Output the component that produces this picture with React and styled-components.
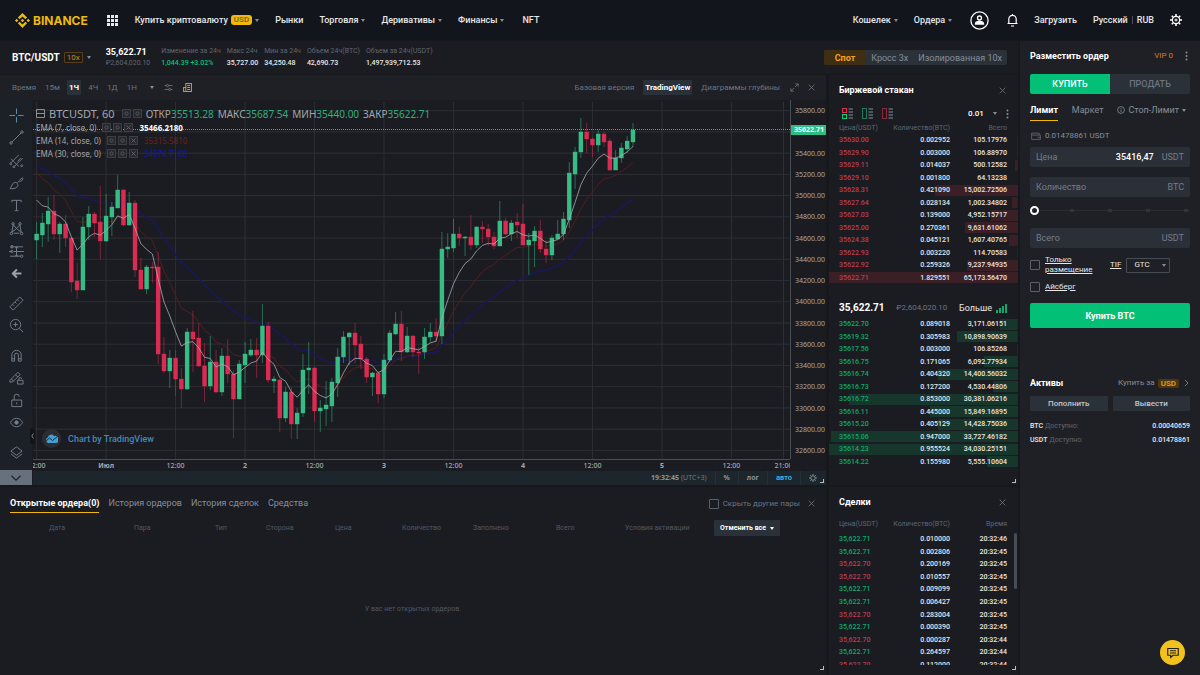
import { useState } from "react";
import styled, { createGlobalStyle, css } from "styled-components";

const colors = {
  header: "#12161c",
  page: "#17181c",
  panel: "#1b1c21",
  form: "#1f2026",
  input: "#2b2f38",
  button: "#2b3139",
  text: "#e6e8ea",
  muted: "#848e9c",
  dim: "#5f6672",
  green: "#02c076",
  gold: "#f0b90b",
};

// [direction, high, body top, body bottom, low]
const candles = [
  ["g", 122, 134, 140, 159], ["g", 113, 123, 135, 147], ["g", 97, 111, 124, 142], ["r", 95, 111, 134, 140],
  ["g", 122, 124, 134, 153], ["r", 115, 124, 138, 147], ["r", 137, 138, 182, 192], ["r", 163, 181, 190, 199],
  ["g", 117, 127, 190, 190], ["g", 106, 114, 127, 140], ["r", 112, 114, 123, 137], ["r", 86, 122, 141, 159],
  ["g", 94, 116, 141, 142], ["g", 102, 107, 117, 136], ["g", 75, 90, 108, 108], ["r", 89, 90, 125, 126],
  ["g", 92, 103, 125, 126], ["r", 100, 103, 170, 177], ["r", 158, 170, 189, 190], ["g", 165, 167, 189, 194],
  ["r", 162, 167, 168, 183], ["r", 152, 167, 254, 264], ["r", 237, 254, 271, 273], ["g", 250, 258, 271, 288],
  ["r", 250, 258, 279, 296], ["r", 268, 279, 289, 308], ["g", 228, 232, 289, 290], ["r", 211, 232, 239, 272],
  ["r", 223, 238, 266, 267], ["r", 243, 266, 286, 302], ["g", 236, 262, 286, 290], ["r", 250, 262, 292, 293],
  ["g", 248, 256, 292, 296], ["r", 239, 256, 274, 283], ["r", 270, 274, 299, 338], ["g", 260, 264, 299, 299],
  ["g", 242, 254, 265, 283], ["g", 239, 250, 255, 257], ["r", 238, 250, 255, 278], ["g", 204, 226, 255, 263],
  ["r", 222, 226, 280, 283], ["g", 276, 279, 281, 293], ["r", 279, 280, 318, 332], ["g", 287, 292, 318, 322],
  ["r", 287, 292, 324, 339], ["g", 308, 313, 324, 339], ["g", 254, 270, 313, 317], ["g", 242, 268, 270, 294],
  ["r", 267, 268, 311, 322], ["g", 300, 308, 311, 332], ["g", 281, 305, 309, 326], ["g", 278, 282, 306, 322],
  ["g", 248, 257, 283, 297], ["g", 231, 237, 257, 263], ["g", 232, 233, 237, 265], ["r", 223, 233, 245, 263],
  ["r", 236, 244, 259, 269], ["r", 257, 259, 277, 283], ["g", 272, 273, 277, 296], ["r", 272, 273, 294, 303],
  ["g", 254, 260, 294, 298], ["g", 230, 233, 260, 262], ["g", 212, 224, 234, 235], ["r", 211, 224, 252, 261],
  ["g", 227, 236, 252, 253], ["r", 235, 236, 252, 257], ["r", 247, 252, 253, 274], ["g", 228, 237, 252, 259],
  ["g", 223, 232, 237, 242], ["r", 218, 232, 236, 242], ["g", 132, 149, 236, 244], ["g", 133, 147, 149, 158],
  ["g", 119, 134, 148, 152], ["r", 127, 134, 138, 146], ["g", 136, 137, 138, 156], ["r", 115, 137, 145, 150],
  ["g", 126, 127, 145, 148], ["r", 121, 127, 129, 143], ["r", 124, 129, 137, 146], ["r", 132, 137, 146, 149],
  ["g", 101, 121, 146, 146], ["r", 118, 121, 134, 135], ["g", 120, 123, 134, 141], ["r", 113, 122, 125, 138],
  ["r", 104, 124, 145, 145], ["g", 133, 140, 145, 175], ["g", 126, 131, 141, 167], ["r", 120, 131, 149, 153],
  ["r", 140, 149, 155, 163], ["g", 135, 138, 155, 160], ["g", 120, 134, 139, 140], ["g", 112, 119, 134, 140],
  ["g", 62, 73, 120, 128], ["g", 47, 52, 74, 89], ["g", 18, 32, 52, 58], ["r", 23, 32, 39, 53],
  ["r", 37, 39, 45, 57], ["g", 30, 34, 45, 52], ["r", 32, 34, 42, 47], ["r", 38, 41, 70, 71],
  ["g", 50, 58, 70, 70], ["g", 43, 48, 58, 63], ["g", 36, 41, 49, 53], ["g", 23, 30, 42, 47],
];

const xAt = (i) => 3.6 + i * 5.79;

const emaPath = (length, seed) => {
  const k = 2 / (length + 1);
  let value = seed;
  return candles
    .map(([dir, , top, bottom], i) => {
      const close = dir === "g" ? top : bottom;
      if (i > 0) value += k * (close - value);
      return `${i ? "L" : "M"}${xAt(i).toFixed(1)} ${value.toFixed(1)}`;
    })
    .join("");
};

const timeMarks = [
  [0, "12:00"], [12, "Июл"], [24, "12:00"], [36, "2"], [48, "12:00"], [60, "3"],
  [72, "12:00"], [84, "4"], [96, "12:00"], [108, "5"], [120, "12:00"], [129, "21:00"],
];

const priceMarks = Array.from({ length: 17 }, (_, i) => 35800 - i * 200);

const asks = [
  ["35630.00", "0.002952", "105.17976"],
  ["35629.90", "0.003000", "106.88970"],
  ["35629.11", "0.014037", "500.12582"],
  ["35629.10", "0.001800", "64.13238"],
  ["35628.31", "0.421090", "15,002.72506"],
  ["35627.64", "0.028134", "1,002.34802"],
  ["35627.03", "0.139000", "4,952.15717"],
  ["35625.00", "0.270361", "9,631.61062"],
  ["35624.38", "0.045121", "1,607.40765"],
  ["35622.93", "0.003220", "114.70583"],
  ["35622.92", "0.259326", "9,237.94935"],
  ["35622.71", "1.829551", "65,173.56470"],
];

const bids = [
  ["35622.70", "0.089018", "3,171.06151"],
  ["35619.32", "0.305983", "10,898.90639"],
  ["35617.56", "0.003000", "106.85268"],
  ["35616.75", "0.171065", "6,092.77934"],
  ["35616.74", "0.404320", "14,400.56032"],
  ["35616.73", "0.127200", "4,530.44806"],
  ["35616.72", "0.853000", "30,381.06216"],
  ["35616.11", "0.445000", "15,849.16895"],
  ["35615.20", "0.405129", "14,428.75036"],
  ["35615.06", "0.947000", "33,727.46182"],
  ["35614.23", "0.955524", "34,030.25151"],
  ["35614.22", "0.155980", "5,555.10604"],
];

const trades = [
  ["g", "35,622.71", "0.010000", "20:32:46"],
  ["g", "35,622.71", "0.002806", "20:32:45"],
  ["r", "35,622.70", "0.200169", "20:32:45"],
  ["r", "35,622.70", "0.010557", "20:32:45"],
  ["g", "35,622.71", "0.009099", "20:32:45"],
  ["g", "35,622.71", "0.006427", "20:32:45"],
  ["r", "35,622.70", "0.283004", "20:32:45"],
  ["g", "35,622.71", "0.000390", "20:32:45"],
  ["r", "35,622.70", "0.000287", "20:32:44"],
  ["g", "35,622.71", "0.264597", "20:32:44"],
  ["r", "35,622.70", "0.112000", "20:32:44"],
];

const DEPTH_MAX = 34030;
const depthOf = (total) =>
  Math.min(100, (Number(total.replace(/,/g, "")) / DEPTH_MAX) * 100);

const stats = [
  ["Изменение за 24ч", "1,044.39 +3.02%", true],
  ["Макс 24ч", "35,727.00"],
  ["Мин за 24ч", "34,250.48"],
  ["Объем 24ч(BTC)", "42,690.73"],
  ["Объем за 24ч(USDT)", "1,497,939,712.53"],
];

/* ---------- icons ---------- */

const Icon = ({ size = 16, children, ...rest }) => (
  <svg
    width={size}
    height={size}
    viewBox="0 0 16 16"
    fill="none"
    stroke="currentColor"
    strokeWidth="1"
    aria-hidden="true"
    {...rest}
  >
    {children}
  </svg>
);

const CloseIcon = () => (
  <Icon size={9} strokeWidth="1.5">
    <path d="M3 3l10 10M13 3L3 13" />
  </Icon>
);

const toolGroups = [
  {
    height: 181,
    tools: [
      ["Перекрестие", <path key="a" stroke="#5b93b5" d="M8 .5v6M8 9.5v6M.5 8h6M9.5 8h6" />],
      ["Линия тренда", <g key="a"><path d="M3 13L13 3" /><circle cx="2.2" cy="13.8" r="1.3" /><circle cx="13.8" cy="2.2" r="1.3" /></g>],
      ["Вилы", <g key="a"><path d="M2 10.5L10.5 2M6 14l8.5-8.5M2 6l8.5 8.5M9 9l3.5-3.5" /><circle cx="1.8" cy="11.5" r="1" /><circle cx="5.2" cy="14.8" r="1" /><circle cx="13.5" cy="13.5" r="1" /></g>],
      ["Кисть", <path key="a" d="M1 13.5c2-.5 1.500-5.500 4.500-6.500 3-.8 5 2 3.500 4.200-1.500 2.300-5 2.600-8 2.300zM9 7c2-3 4 1 6-4.500M11 4.500l4-3" />],
      ["Текст", <path key="a" d="M3 4.5V2.500h10v2M8 2.500v11M6 13.500h4" />],
      ["Паттерн", <g key="a"><path d="M3 12L4.500 4 8 8l3.500-4L13 12 8 8zM4 11l-.5 1M5 13h6" /><circle cx="4.3" cy="3" r="1.3" /><circle cx="11.7" cy="3" r="1.3" /><circle cx="2.5" cy="13.3" r="1.3" /><circle cx="13.5" cy="13.3" r="1.3" /></g>],
      ["Прогноз", <g key="a"><path d="M3 1v3M3 3h12M5 8h11M0 8h3M1 13h11M8 3v10M6.500 11.500L8 13l1.500-1.500M6.500 4.500L8 3l1.500 1.500" /><circle cx="3" cy="3" r="1.3" /><circle cx="3" cy="8" r="1.3" /><circle cx="13.5" cy="13" r="1.3" /></g>],
      ["Назад", <path key="a" stroke="#9aa4af" strokeWidth="2.4" d="M14 8H4M8.500 3L3.500 8l5 5" />],
    ],
  },
  {
    height: 45,
    tools: [
      ["Линейка", <path key="a" d="M1 11.500L11.500 1 15 4.500 4.500 15zM4 9l1.500 1.500M6.500 6.500L8 8M9 4l1.500 1.500" />],
      ["Увеличить", <g key="a"><circle cx="7" cy="7" r="5.5" /><path d="M11 11l4 4M4.500 7h5M7 4.500v5" /></g>],
    ],
  },
  {
    height: 90,
    tools: [
      ["Магнит", <path key="a" d="M3 14V7.500a5 5 0 0 1 10 0V14h-3V7.500a2 2 0 0 0-4 0V14zM3 11.500h3M10 11.500h3" />],
      ["Режим рисования", <g key="a"><path d="M1 11L9.500 2.500 12 5 4 12.500l-3 .5zM2.500 9.500L5 12M7 5l2.500 2.500" /><path d="M9 11h6v4H9zM10.500 11V9.500a1.500 1.500 0 0 1 3 0" /></g>],
      ["Заблокировать", <path key="a" d="M3 7.500h10.500v7H3zM5.500 7.500V4a2.700 2.700 0 0 1 5.400 0M8.200 10v2" />],
      ["Скрыть", <g key="a"><path d="M1.500 8C3.500 4.500 5.500 3.500 8 3.500s4.500 1 6.500 4.500c-2 3.500-4 4.500-6.500 4.500S3.500 11.500 1.500 8z" /><circle cx="8" cy="8" r="1.8" fill="currentColor" /></g>],
    ],
  },
  {
    height: 22,
    tools: [
      ["Слои", <path key="a" d="M8 2L2 6.500 8 11l6-4.500zM2 9.500L8 14l6-4.500" />],
    ],
  },
];

const Diamond = () => (
  <svg width="15" height="15" viewBox="0 0 127 127" fill={colors.gold} aria-hidden="true">
    <path d="M38.7 53.2 63.3 28.6 87.9 53.2 102.2 38.9 63.3 0 24.4 38.9z" />
    <path d="M0 63.3 14.3 49l14.3 14.3-14.3 14.3z" />
    <path d="M38.7 73.4 63.3 98 87.9 73.4 102.2 87.7 63.3 126.6 24.4 87.7z" />
    <path d="M98 63.3 112.3 49l14.3 14.3-14.3 14.3z" />
    <path d="M77.8 63.3 63.3 48.8 48.8 63.3 63.3 77.8z" />
  </svg>
);

const BookIcon = ({ top, bottom }) => (
  <svg width="11" height="11" viewBox="0 0 11 11" fill="none" aria-hidden="true">
    {top === bottom ? (
      <rect x=".5" y=".5" width="4" height="10" stroke={top} />
    ) : (
      <>
        <rect x=".5" y=".5" width="4" height="4" stroke={top} />
        <rect x=".5" y="6.5" width="4" height="4" stroke={bottom} />
      </>
    )}
    <path d="M6.500 1H11M6.500 4H11M6.500 7H11M6.500 10H11" stroke="#848e9c" />
  </svg>
);

/* ---------- shared ---------- */

const GlobalStyle = createGlobalStyle`
  * { box-sizing: border-box; }
  body {
    margin: 0;
    background: ${colors.page};
    color: ${colors.text};
    font-family: Roboto, "Noto Sans", sans-serif;
    font-size: 8px;
    line-height: 12px;
  }
  button, input, select { font: inherit; color: inherit; }
  button { padding: 0; border: 0; background: none; }
  h2, p { margin: 0; }
  a { color: inherit; text-decoration: none; }
`;

const Caret = styled.i`
  flex: none;
  width: 0;
  height: 0;
  border: 2px solid transparent;
  border-top: 3px solid ${(p) => p.$color || colors.muted};
  border-bottom: 0;
`;

const Title = styled.h2`
  color: #fff;
  font-size: 9px;
  font-weight: 700;
  line-height: 12px;
`;

const IconButton = styled.button`
  display: flex;
  align-items: center;
  justify-content: center;
  color: ${(p) => p.$color || "#6b7480"};
`;

const Corner = styled.i`
  position: absolute;
  right: 2px;
  bottom: ${(p) => p.$bottom || 2}px;
  width: 4px;
  height: 4px;
  border: solid #b7bdc6;
  border-width: 0 1px 1px 0;
`;

const DotsButton = styled(IconButton)`
  flex: none;
`;

const Dots = () => (
  <DotsButton aria-label="Ещё" $color={colors.muted}>
    <svg width="3" height="10" viewBox="0 0 3 10" fill="currentColor">
      <circle cx="1.5" cy="1.5" r="1" />
      <circle cx="1.5" cy="5" r="1" />
      <circle cx="1.5" cy="8.5" r="1" />
    </svg>
  </DotsButton>
);

/* ---------- header ---------- */

const Shell = styled.div`
  display: flex;
  flex-direction: column;
  height: 100vh;
  overflow: hidden;
`;

const Header = styled.header`
  display: flex;
  align-items: center;
  justify-content: space-between;
  flex: none;
  height: 40px;
  padding: 0 18px 0 15px;
  background: ${colors.header};
  font-size: 9px;
  font-weight: 500;
`;

const Logo = styled.a`
  display: flex;
  align-items: center;
  gap: 3px;
  margin-right: 19px;
  color: ${colors.gold};
  font-family: Inter, sans-serif;
  font-size: 12px;
  font-weight: 700;
  line-height: 15px;
`;

const NavGroup = styled.nav`
  display: flex;
  align-items: center;
  white-space: nowrap;
`;

const NavLink = styled.a`
  display: flex;
  align-items: center;
  gap: 3px;
  margin-right: ${(p) => p.$gap || 16}px;
`;

const UsdTag = styled.span`
  padding: 0 3px;
  border-radius: 3px;
  background: ${colors.gold};
  color: #7a6114;
  font-size: 8px;
  line-height: 10px;
`;

const Divider = styled.i`
  width: 1px;
  height: 8px;
  margin: 0 1px;
  background: #4a5059;
`;

const Apps = styled(IconButton)`
  margin-right: 17px;
`;

const TopBar = () => (
  <Header>
    <NavGroup>
      <Logo href="#">
        <Diamond />
        BINANCE
      </Logo>
      <Apps aria-label="Сервисы" $color={colors.text}>
        <svg width="11" height="11" viewBox="0 0 11 11" fill="currentColor">
          {[0, 4, 8].map((x) => [0, 4, 8].map((y) => <rect key={x + "-" + y} x={x} y={y} width="3" height="3" />))}
        </svg>
      </Apps>
      <NavLink href="#">
        Купить криптовалюту <UsdTag>USD</UsdTag>
        <Caret />
      </NavLink>
      <NavLink href="#">Рынки</NavLink>
      <NavLink href="#">Торговля <Caret /></NavLink>
      <NavLink href="#">Деривативы <Caret /></NavLink>
      <NavLink href="#" $gap={18}>Финансы <Caret /></NavLink>
      <NavLink href="#">NFT</NavLink>
    </NavGroup>
    <NavGroup>
      <NavLink href="#">Кошелек <Caret /></NavLink>
      <NavLink href="#" $gap={18}>Ордера <Caret /></NavLink>
      <NavLink href="#" $gap={18} aria-label="Профиль">
        <svg width="19" height="19" viewBox="0 0 19 19" fill="none" stroke="#fff" strokeWidth="1.3">
          <circle cx="9.5" cy="9.5" r="8.6" />
          <circle cx="9.5" cy="7" r="2" />
          <path d="M5.500 13c0-3.500 8-3.500 8 0z" fill="#fff" />
        </svg>
      </NavLink>
      <NavLink href="#" aria-label="Уведомления">
        <svg width="11" height="14" viewBox="0 0 11 14" fill="none" stroke="#fff" strokeWidth="1.2">
          <path d="M.5 10.500h10M1.800 10V6a3.700 3.700 0 0 1 7.400 0v4M5.500 1v1.500M4 13h3" />
        </svg>
      </NavLink>
      <NavLink href="#">Загрузить</NavLink>
      <NavLink href="#">Русский <Divider /> RUB</NavLink>
      <IconButton aria-label="Настройки" $color="#fff">
        <svg width="12" height="12" viewBox="0 0 12 12" fill="none" stroke="currentColor">
          <circle cx="6" cy="6" r="3.6" strokeWidth="1.2" />
          <circle cx="6" cy="6" r="1" />
          <path strokeWidth="1.6" d="M6 0v2M6 10v2M0 6h2M10 6h2M1.800 1.800l1.400 1.400M8.800 8.800l1.400 1.400M10.200 1.800L8.800 3.200M3.200 8.800l-1.400 1.400" />
        </svg>
      </IconButton>
    </NavGroup>
  </Header>
);

/* ---------- ticker ---------- */

const Body = styled.div`
  display: grid;
  grid-template-columns: minmax(0, 1fr) 180px;
  gap: 2px;
  flex: 1;
  min-height: 0;
  padding-top: 1px;
`;

const Workspace = styled.main`
  display: flex;
  flex-direction: column;
  gap: 1px;
  min-width: 0;
  min-height: 0;
`;

const Ticker = styled.section`
  display: flex;
  align-items: center;
  flex: none;
  height: 33px;
  padding: 0 11px 0 12px;
  background: ${colors.panel};
  white-space: nowrap;
`;

const Pair = styled.button`
  display: flex;
  align-items: center;
  gap: 4px;
  margin-right: 15px;
  color: #fff;
  font-size: 10px;
  font-weight: 700;
`;

const Leverage = styled.span`
  padding: 0 2px;
  border: 1px solid #5a3d14;
  border-radius: 1px;
  color: #c98414;
  font-size: 8px;
  font-weight: 400;
  line-height: 9px;
`;

const LastPrice = styled.div`
  margin-right: 11px;
  color: #fff;
  font-size: 9px;
  font-weight: 700;
  line-height: 11px;

  span {
    display: block;
    color: ${colors.dim};
    font-size: 7px;
    font-weight: 400;
    line-height: 10px;
  }
`;

const Stats = styled.dl`
  display: flex;
  gap: 6px;
  margin: 0 auto 0 0;

  dt {
    color: ${colors.dim};
    font-size: 7px;
    line-height: 11px;
  }
`;

const StatValue = styled.dd`
  margin: 0;
  color: ${(p) => (p.$up ? colors.green : colors.text)};
  font-size: 7px;
  font-weight: 500;
  line-height: 12px;
`;

const Modes = styled.div`
  display: flex;
  border-radius: 2px;
  overflow: hidden;
  background: ${colors.button};
`;

const Mode = styled.button`
  height: 15px;
  padding: 0 5px;
  color: ${(p) => (p.$active ? "#f5a21b" : colors.muted)};
  font-size: 9px;
  ${(p) =>
    p.$active &&
    css`
      padding: 0 11px;
      background: #3f2e14;
      font-weight: 700;
    `}
`;

const PairTicker = () => (
  <Ticker>
    <Pair>
      BTC/USDT <Leverage>10x</Leverage>
      <Caret />
    </Pair>
    <LastPrice>
      35,622.71
      <span>₽2,604,020.10</span>
    </LastPrice>
    <Stats>
      {stats.map(([label, value, up]) => (
        <div key={label}>
          <dt>{label}</dt>
          <StatValue $up={up}>{value}</StatValue>
        </div>
      ))}
    </Stats>
    <Modes>
      <Mode $active>Спот</Mode>
      <Mode>Кросс 3x</Mode>
      <Mode>Изолированная 10x</Mode>
    </Modes>
  </Ticker>
);

/* ---------- chart ---------- */

const Panels = styled.div`
  display: grid;
  grid-template-columns: minmax(0, 1fr) 189px;
  gap: 3px;
  flex: 1;
  min-height: 0;
`;

const Column = styled.div`
  display: flex;
  flex-direction: column;
  gap: 2px;
  min-height: 0;
`;

const ChartPanel = styled.section`
  display: flex;
  flex-direction: column;
  flex: none;
  height: 410px;
  background: ${colors.panel};
`;

const ChartBar = styled.div`
  display: flex;
  align-items: center;
  flex: none;
  height: 25px;
  padding: 0 10px;
  background: #1f2025;
  color: #6b7480;
  font-size: 8px;
  line-height: 15px;
`;

const Interval = styled.button`
  display: block;
  height: 15px;
  margin-right: ${(p) => p.$gap || 5}px;
  padding: 0 2px;
  border-radius: 1px;
  ${(p) =>
    p.$active &&
    css`
      background: ${colors.button};
      color: #fff;
      font-weight: 700;
    `}
`;

const Spacer = styled.div`
  flex: 1;
`;

const BarIcons = styled.div`
  display: flex;
  align-items: center;
  gap: ${(p) => p.$gap}px;
`;

const ChartBody = styled.div`
  display: flex;
  flex: 1;
  min-height: 0;
`;

const Rail = styled.div`
  display: flex;
  flex-direction: column;
  gap: 7px;
  flex: none;
  width: 32px;
  padding-top: 4px;
  background: #1c2027;
  color: #75808b;
`;

const ToolGroup = styled.div`
  display: grid;
  grid-auto-rows: 1fr;
  flex: none;
  height: ${(p) => p.$height}px;
`;

const Tool = styled(IconButton)`
  color: inherit;
`;

const Collapse = styled(IconButton)`
  flex: none;
  height: 15px;
  margin-top: auto;
  background: #66717c;
`;

const PlotColumn = styled.div`
  display: flex;
  flex-direction: column;
  flex: 1;
  min-width: 0;
  margin-left: 1px;
`;

const PlotRow = styled.div`
  position: relative;
  display: flex;
  flex: 1;
  min-height: 0;
`;

const Plot = styled.svg`
  flex: 1;
  min-width: 0;
  height: 100%;
  overflow: hidden;
  font-family: "Noto Sans", sans-serif;
  font-size: 7px;
`;

const PriceAxis = styled.div`
  position: relative;
  display: flex;
  flex-direction: column;
  justify-content: space-between;
  flex: none;
  width: 36px;
  height: 359px;
  padding: 6px 0 4px 4px;
  border-left: 1px solid #4b4d52;
  color: #a6a8ad;
  font-family: "Noto Sans", sans-serif;
  font-size: 7px;
  line-height: 9px;

  span {
    height: 9px;
  }
`;

const PriceTag = styled.b`
  position: absolute;
  top: 25px;
  right: 0;
  left: 0;
  height: 10px;
  padding-left: 3px;
  background: #2ebd85;
  color: #fff;
  line-height: 10px;
`;

const Legend = styled.div`
  position: absolute;
  top: 6px;
  left: 3px;
  color: #a4a6ab;
  font-family: "Noto Sans", sans-serif;
`;

const LegendRow = styled.div`
  display: flex;
  align-items: center;
  gap: ${(p) => p.$gap || 8}px;
  height: ${(p) => p.$height || 13}px;
  white-space: nowrap;
`;

const LegendValue = styled.span`
  color: ${(p) => p.$color};
  font-weight: ${(p) => (p.$bold ? 700 : 400)};
`;

const Symbol = styled.span`
  margin-right: 3px;
  font-size: 11px;
`;

const Ohlc = styled.span`
  font-size: 10px;

  b {
    color: #2fae80;
    font-weight: 400;
  }
`;

const MiniBoxes = styled.span`
  display: flex;
  gap: 2px;
`;

const Credit = styled.a`
  position: absolute;
  bottom: 23px;
  left: 9px;
  display: flex;
  align-items: center;
  gap: 7px;
  color: #4488ba;
  font-size: 9px;
  font-weight: 500;
`;

const CreditBadge = styled.span`
  display: flex;
  align-items: center;
  justify-content: center;
  width: 19px;
  height: 19px;
  border-radius: 50%;
  background: #2c2d31;
`;

const RailHandle = styled.button`
  position: absolute;
  bottom: 27px;
  left: -3px;
  display: flex;
  align-items: center;
  justify-content: center;
  width: 5px;
  height: 16px;
  border-radius: 2px;
  background: #111318;
  color: #a0a6ae;
`;

const ChartFooter = styled.div`
  position: relative;
  display: flex;
  align-items: center;
  justify-content: flex-end;
  flex: none;
  height: 14px;
  padding-right: 1px;
  background: #1c262c;
  color: #6f7b85;
  font-family: "Noto Sans", sans-serif;
  font-size: 7px;

  b {
    margin-right: 2px;
    color: #8a959e;
  }
`;

const FooterGroup = styled.div`
  display: flex;
  margin-left: 8px;
`;

const FooterItem = styled.button`
  display: flex;
  align-items: center;
  justify-content: center;
  height: 14px;
  padding: 0 8px;
  border-left: 1px solid #243139;
  color: ${(p) => (p.$active ? "#33b4e0" : "#8a959e")};
  font-weight: 700;
`;

const Boxes = ({ count }) => (
  <MiniBoxes>
    {Array.from({ length: count }, (_, i) => (
      <svg key={i} width="9" height="9" viewBox="0 0 9 9" fill="none" stroke="#3c3f45">
        <rect x=".5" y=".5" width="8" height="8" fill="#26282d" />
        {i === 2 ? (
          <path d="M2.500 2.500l4 4M6.500 2.500l-4 4" stroke="#5e6167" />
        ) : (
          <circle cx="4.5" cy="4.5" r="1.6" stroke="#54575d" />
        )}
      </svg>
    ))}
  </MiniBoxes>
);

const emaRows = [
  ["EMA (7, close, 0)", "35466.2180", "#fff", true],
  ["EMA (14, close, 0)", "35315.5810", "#6f1f1f"],
  ["EMA (30, close, 0)", "34974.7180", "#1616a8"],
];

const CandleChart = () => (
  <Plot role="img" aria-label="График BTCUSDT">
    <g stroke="#2d2f33">
      {priceMarks.map((price, i) => (
        <line key={price} x1="0" x2="100%" y1={10.7 + i * 21.23} y2={10.7 + i * 21.23} />
      ))}
      {timeMarks.map(([i]) => (
        <line key={i} x1={xAt(i)} x2={xAt(i)} y1="2" y2="359" />
      ))}
    </g>
    <line x1="0" x2="100%" y1="359.5" y2="359.5" stroke="#4b4d52" />
    <path d={emaPath(30, 65)} fill="none" stroke="#18185c" strokeWidth="1.5" />
    <path d={emaPath(14, 72)} fill="none" stroke="#541c1d" />
    {candles.map(([dir, high, top, bottom, low], i) => (
      <g key={i} fill={dir === "g" ? "#36bd85" : "#dc2b52"}>
        <rect x={xAt(i) - 0.5} y={high} width="1" height={low - high} opacity=".5" />
        <rect x={xAt(i) - 2.2} y={top - 0.2} width="4.4" height={bottom - top + 0.4} />
      </g>
    ))}
    <path d={emaPath(7, 100)} fill="none" stroke="#a9abad" strokeWidth=".8" />
    <line x1="0" x2="100%" y1="29.5" y2="29.5" stroke="#2ebd85" strokeDasharray="1 1" />
    <g fill="#a6a8ad" textAnchor="middle">
      {timeMarks.map(([i, label]) => (
        <text key={i} x={xAt(i)} y="368" fontWeight={label.length < 5 ? 700 : 500}>
          {label}
        </text>
      ))}
    </g>
  </Plot>
);

const Chart = () => (
  <ChartPanel>
    <ChartBar>
      <Interval as="span">Время</Interval>
      <Interval>15м</Interval>
      <Interval $active>1Ч</Interval>
      <Interval>4Ч</Interval>
      <Interval>1Д</Interval>
      <Interval $gap={11}>1Н</Interval>
      <BarIcons $gap={10}>
        <Caret />
        <IconButton aria-label="Индикаторы">
          <Icon size={9} strokeWidth="1.6">
            <path d="M1 4.500h3M8 4.500h7M1 11.500h7M12 11.500h3" />
            <circle cx="6" cy="4.5" r="2" />
            <circle cx="10" cy="11.5" r="2" />
          </Icon>
        </IconButton>
        <IconButton aria-label="Новости" $color="#c99a2e">
          <Icon size={9} strokeWidth="1.8">
            <path d="M5 1h10v14H5zM5 8H1v7h5M7.500 4.500h5M7.500 8h5M7.500 11.500h5" />
          </Icon>
        </IconButton>
      </BarIcons>
      <Spacer />
      <Interval $gap={7}>Базовая версия</Interval>
      <Interval $active $gap={7}>TradingView</Interval>
      <Interval $gap={8}>Диаграммы глубины</Interval>
      <BarIcons $gap={8}>
        <IconButton aria-label="Развернуть">
          <Icon size={9} strokeWidth="1.5">
            <path d="M9.500 1.500h5v5M14 2L9 7M6.500 14.500h-5v-5M2 14l5-5" />
          </Icon>
        </IconButton>
        <IconButton aria-label="Закрыть график"><CloseIcon /></IconButton>
      </BarIcons>
    </ChartBar>
    <ChartBody>
      <Rail>
        {toolGroups.map((group) => (
          <ToolGroup key={group.height} $height={group.height}>
            {group.tools.map(([label, drawing]) => (
              <Tool key={label} aria-label={label}>
                <Icon size={label === "Назад" ? 13 : 15}>{drawing}</Icon>
              </Tool>
            ))}
          </ToolGroup>
        ))}
        <Collapse aria-label="Свернуть панель" $color="#1c2027">
          <Icon size={12} strokeWidth="1.5"><path d="M2 5l6 6 6-6" /></Icon>
        </Collapse>
      </Rail>
      <PlotColumn>
        <PlotRow>
          <CandleChart />
          <PriceAxis>
            {priceMarks.map((price) => (
              <span key={price}>{price === 35600 ? "" : price.toFixed(2)}</span>
            ))}
            <PriceTag>35622.71</PriceTag>
          </PriceAxis>
          <Legend>
            <LegendRow $height={15} $gap={4}>
              <svg width="9" height="9" viewBox="0 0 9 9" fill="none" stroke="#8c8e93">
                <path d="M.5.5h8v8h-8zM.5 4.500h8" />
              </svg>
              <Symbol>BTCUSDT, 60</Symbol>
              <Boxes count={2} />
              <Ohlc>ОТКР<b>35513.28</b></Ohlc>
              <Ohlc>МАКС<b>35687.54</b></Ohlc>
              <Ohlc>МИН<b>35440.00</b></Ohlc>
              <Ohlc>ЗАКР<b>35622.71</b></Ohlc>
            </LegendRow>
            {emaRows.map(([label, value, color, bold]) => (
              <LegendRow key={label} $gap={6}>
                {label}
                <Boxes count={3} />
                <LegendValue $color={color} $bold={bold}>{value}</LegendValue>
              </LegendRow>
            ))}
          </Legend>
          <Credit href="#">
            <CreditBadge>
              <svg width="13" height="9" viewBox="0 0 13 9">
                <path d="M3 9a3 3 0 0 1-.3-5.500 3.500 3.500 0 0 1 6.300-1.500 3 3 0 0 1 2 7z" fill="#3f9fd8" />
                <path d="M.5 7.500L4.500 4l3 2.500 5-4" fill="none" stroke="#1f2a33" />
              </svg>
            </CreditBadge>
            Chart by TradingView
          </Credit>
          <RailHandle aria-label="Скрыть инструменты">
            <svg width="3" height="6" viewBox="0 0 3 6" fill="none" stroke="currentColor" strokeWidth=".8">
              <path d="M2.500.5L.8 3l1.700 2.500" />
            </svg>
          </RailHandle>
        </PlotRow>
        <ChartFooter>
          <b>19:32:45</b> (UTC+3)
          <FooterGroup>
            <FooterItem>%</FooterItem>
            <FooterItem>лог</FooterItem>
            <FooterItem $active>авто</FooterItem>
            <FooterItem aria-label="Настройки графика">
              <Icon size={8} strokeWidth="1.8">
                <circle cx="8" cy="8" r="4.5" />
                <path d="M8 0v3M8 13v3M0 8h3M13 8h3M2.500 2.500l2 2M11.500 11.500l2 2M13.500 2.500l-2 2M4.500 11.500l-2 2" />
              </Icon>
            </FooterItem>
          </FooterGroup>
          <Corner />
        </ChartFooter>
      </PlotColumn>
    </ChartBody>
  </ChartPanel>
);

/* ---------- open orders ---------- */

const OrdersPanel = styled.section`
  position: relative;
  display: flex;
  flex-direction: column;
  flex: 1;
  min-height: 0;
  background: ${colors.panel};
`;

const OrdersBar = styled.div`
  display: flex;
  align-items: center;
  height: 25px;
  padding: 8px 10px 0 10px;
`;

const OrdersTab = styled.button`
  height: 18px;
  margin-right: 9px;
  border-bottom: 1px solid transparent;
  color: ${colors.muted};
  font-size: 9px;
  ${(p) =>
    p.$active &&
    css`
      border-color: ${colors.gold};
      color: #fff;
      font-weight: 700;
    `}
`;

const HideOthers = styled.label`
  display: flex;
  align-items: center;
  gap: 4px;
  margin-right: 7px;
  color: #6b7480;
`;

const Check = styled.input`
  appearance: none;
  flex: none;
  width: 10px;
  height: 10px;
  margin: 0;
  border: 1px solid #5a616d;
  border-radius: 1px;

  &:checked {
    background: ${colors.gold};
  }
`;

const OrdersTable = styled.table`
  width: 100%;
  padding: 8px 0 0 49px;
  border-spacing: 0;
  table-layout: fixed;
  color: #525863;
  font-size: 7px;

  th {
    padding: 0;
    font-weight: 400;
    text-align: left;
  }
`;

const CancelAll = styled.button`
  display: flex;
  align-items: center;
  gap: 4px;
  height: 16px;
  padding: 0 6px;
  border-radius: 1px;
  background: ${colors.button};
  color: #fff;
  font-size: 7px;
  font-weight: 700;
  white-space: nowrap;
`;

const Empty = styled.p`
  flex: 1;
  padding-top: 67px;
  color: #525863;
  font-size: 7px;
  text-align: center;
`;

const orderColumns = [
  ["Дата", 85], ["Пара", 81], ["Тип", 51], ["Сторона", 69], ["Цена", 67],
  ["Количество", 71], ["Заполнено", 83], ["Всего", 69], ["Условия активации", 89],
];

const OpenOrders = () => {
  const [hidden, setHidden] = useState(false);
  return (
    <OrdersPanel>
      <OrdersBar>
        <OrdersTab $active>Открытые ордера(0)</OrdersTab>
        <OrdersTab>История ордеров</OrdersTab>
        <OrdersTab>История сделок</OrdersTab>
        <OrdersTab>Средства</OrdersTab>
        <Spacer />
        <HideOthers>
          <Check type="checkbox" checked={hidden} onChange={(e) => setHidden(e.target.checked)} />
          Скрыть другие пары
        </HideOthers>
        <IconButton aria-label="Закрыть ордера"><CloseIcon /></IconButton>
      </OrdersBar>
      <OrdersTable>
        <colgroup>
          {orderColumns.map(([name, width]) => <col key={name} width={width} />)}
          <col />
        </colgroup>
        <thead>
          <tr>
            {orderColumns.map(([name]) => <th key={name}>{name}</th>)}
            <th>
              <CancelAll>Отменить все <Caret $color="#fff" /></CancelAll>
            </th>
          </tr>
        </thead>
      </OrdersTable>
      <Empty>У вас нет открытых ордеров.</Empty>
      <Corner $bottom={5} />
    </OrdersPanel>
  );
};

/* ---------- order book & trades ---------- */

const BookPanel = styled.section`
  position: relative;
  flex: none;
  height: 410px;
  background: ${colors.panel};
`;

const TradesPanel = styled.section`
  position: relative;
  display: flex;
  flex-direction: column;
  flex: 1;
  min-height: 0;
  background: ${colors.panel};
`;

const PanelHead = styled.div`
  display: flex;
  align-items: center;
  justify-content: space-between;
  flex: none;
  height: 30px;
  padding: 0 11px 0 10px;
`;

const BookTools = styled.div`
  display: flex;
  align-items: center;
  gap: 9px;
  height: 17px;
  padding: 0 9px 0 13px;
`;

const StepSelect = styled.select`
  appearance: none;
  margin-left: auto;
  padding: 0;
  border: 0;
  background: transparent;
  color: #fff;
  font-size: 8px;
  font-weight: 500;
`;

const BookTable = styled.table`
  display: block;
  font-size: 7px;
  font-weight: 500;

  thead,
  tbody {
    display: grid;
    grid-auto-rows: 1fr;
  }

  tbody {
    height: ${(p) => p.$height}px;
    margin-top: ${(p) => p.$gap || 0}px;
  }

  tr {
    display: grid;
    grid-template-columns: 62px 49px 1fr;
    align-items: center;
    padding: 0 11px 0 10px;
    background-repeat: no-repeat;
    background-position: right center;
  }

  th,
  td {
    padding: 0;
    text-align: right;
    white-space: nowrap;
  }

  td:first-child,
  th:first-child {
    text-align: left;
  }

  th {
    color: ${colors.dim};
    font-weight: 400;
    line-height: ${(p) => p.$head || 12}px;
  }

  th:nth-child(2) {
    display: flex;
    justify-content: flex-end;
  }
`;

const Price = styled.td`
  color: ${(p) => (p.$side === "g" ? "#0da96c" : "#b93c51")};
`;

const MidPrice = styled.div`
  display: flex;
  align-items: center;
  justify-content: space-between;
  height: 34px;
  padding: 14px 11px 0 10px;

  b {
    color: #fff;
    font-size: 10px;
    font-weight: 700;
  }

  span {
    color: #6b7480;
    font-size: 8px;
  }

  a {
    display: flex;
    align-items: center;
    gap: 4px;
    font-size: 9px;
  }
`;

const TradesBody = styled.div`
  display: flex;
  flex: 1;
  align-items: flex-start;
  min-height: 0;
  margin-bottom: 10px;
  overflow: hidden;

  table {
    flex: 1;
  }
`;

const Scrollbar = styled.i`
  position: absolute;
  top: 46px;
  right: 1px;
  width: 3px;
  height: 56px;
  border-radius: 2px;
  background: #474d57;
`;

const BookRows = ({ rows, side }) => (
  <tbody>
    {rows.map(([price, amount, total]) => (
      <tr
        key={price}
        style={{
          backgroundImage: side === "g" ? "linear-gradient(#17362c, #17362c)" : "linear-gradient(#3a1f27, #3a1f27)",
          backgroundSize: `${depthOf(total)}% 11px`,
        }}
      >
        <Price $side={side}>{price}</Price>
        <td>{amount}</td>
        <td>{total}</td>
      </tr>
    ))}
  </tbody>
);

const OrderBook = () => (
  <BookPanel>
    <PanelHead>
      <Title>Биржевой стакан</Title>
      <IconButton aria-label="Закрыть стакан"><CloseIcon /></IconButton>
    </PanelHead>
    <BookTools>
      <IconButton aria-label="Весь стакан"><BookIcon top="#d9304e" bottom="#0ecb81" /></IconButton>
      <IconButton aria-label="Покупка"><BookIcon top="#1c7a55" bottom="#1c7a55" /></IconButton>
      <IconButton aria-label="Продажа"><BookIcon top="#8a2a3c" bottom="#8a2a3c" /></IconButton>
      <StepSelect aria-label="Шаг цены" defaultValue="0.01">
        <option>0.01</option>
        <option>0.1</option>
      </StepSelect>
      <Caret />
      <Dots />
    </BookTools>
    <BookTable $height={150}>
      <thead>
        <tr>
          <th>Цена(USDT)</th>
          <th>Количество(BTC)</th>
          <th>Всего</th>
        </tr>
      </thead>
      <BookRows rows={asks} side="r" />
    </BookTable>
    <MidPrice>
      <b>35,622.71</b>
      <span>₽2,604,020.10</span>
      <a href="#">
        Больше
        <svg width="11" height="9" viewBox="0 0 11 9" fill="#0da96c" aria-hidden="true">
          <path d="M0 6h2v3H0zM3 4h2v5H3zM6 2h2v7H6zM9 0h2v9H9z" />
        </svg>
      </a>
    </MidPrice>
    <BookTable $height={150}>
      <BookRows rows={bids} side="g" />
    </BookTable>
    <Corner />
  </BookPanel>
);

const Trades = () => (
  <TradesPanel>
    <PanelHead>
      <Title>Сделки</Title>
      <IconButton aria-label="Закрыть сделки"><CloseIcon /></IconButton>
    </PanelHead>
    <TradesBody>
      <BookTable $height={138} $head={14} $gap={2}>
        <thead>
          <tr>
            <th>Цена(USDT)</th>
            <th>Количество(BTC)</th>
            <th>Время</th>
          </tr>
        </thead>
        <tbody>
          {trades.map(([side, price, amount, time], i) => (
            <tr key={i}>
              <Price $side={side}>{price}</Price>
              <td>{amount}</td>
              <td>{time}</td>
            </tr>
          ))}
        </tbody>
      </BookTable>
    </TradesBody>
    <Scrollbar />
    <Corner $bottom={5} />
  </TradesPanel>
);

/* ---------- order form ---------- */

const FormPanel = styled.aside`
  position: relative;
  padding: 0 10px;
  background: ${colors.form};
`;

const FormHead = styled.div`
  display: flex;
  align-items: center;
  height: 33px;
  padding: 0 2px 3px 0;

  a {
    margin: 0 12px 0 auto;
    color: #c98414;
    font-size: 8px;
  }
`;

const Sides = styled.div`
  display: grid;
  grid-template-columns: 1fr 1fr;
  overflow: hidden;
  border-radius: 2px;
`;

const Side = styled.button`
  height: 20px;
  background: ${(p) => (p.$active ? colors.green : colors.button)};
  color: ${(p) => (p.$active ? "#fff" : "#6b7480")};
  font-size: 9px;
  font-weight: 500;
`;

const TypeTabs = styled.div`
  display: flex;
  justify-content: space-between;
  height: 31px;
  padding: 9px 4px 0 0;
`;

const TypeTab = styled.button`
  display: flex;
  align-items: center;
  gap: 3px;
  height: 18px;
  padding-bottom: 3px;
  border-bottom: 1px solid transparent;
  color: ${colors.muted};
  font-size: 9px;
  ${(p) =>
    p.$active &&
    css`
      border-color: ${colors.gold};
      color: #fff;
      font-weight: 700;
    `}
`;

const Balance = styled.p`
  display: flex;
  align-items: center;
  gap: 4px;
  height: 22px;
  padding-left: 1px;
  color: ${colors.muted};
  font-size: 8px;

  svg {
    color: ${colors.dim};
  }
`;

const Field = styled.label`
  display: flex;
  align-items: center;
  height: 20px;
  padding: 0 6px;
  border-radius: 2px;
  background: ${colors.input};
  color: #747d8a;
  font-size: 9px;

  input {
    flex: 1;
    min-width: 0;
    padding: 0 8px 0 0;
    border: 0;
    outline: 0;
    background: transparent;
    color: #fff;
    font-weight: 500;
    text-align: right;
  }
`;

const Stack = styled.div`
  display: grid;
  grid-template-columns: minmax(0, 1fr);
  gap: 10px;
`;

const SliderRow = styled.div`
  display: flex;
  align-items: center;
  height: 7px;
  margin-bottom: 4px;

  input {
    appearance: none;
    width: 100%;
    height: 9px;
    margin: 0;
    background:
      radial-gradient(circle at 42px 50%, #2f333b 2px, transparent 2px),
      radial-gradient(circle at 80px 50%, #2f333b 2px, transparent 2px),
      radial-gradient(circle at 118px 50%, #2f333b 2px, transparent 2px),
      radial-gradient(circle at 156px 50%, #2f333b 2px, transparent 2px),
      linear-gradient(#292c33, #292c33) center / 100% 1px no-repeat;
  }

  input::-webkit-slider-thumb {
    appearance: none;
    width: 9px;
    height: 9px;
    border: 2px solid #fff;
    border-radius: 50%;
    background: ${colors.form};
  }
`;

const Options = styled.div`
  display: grid;
  grid-template-columns: 80px 1fr;
  align-items: center;
  row-gap: 7px;
  padding: 7px 0 11px;
  font-size: 8px;
  line-height: 10px;
`;

const Option = styled.label`
  display: flex;
  align-items: center;
  gap: 5px;
  text-decoration: underline;
`;

const TifSelect = styled.select`
  appearance: none;
  width: 44px;
  height: 15px;
  padding: 0 7px;
  border: 1px solid #474d57;
  border-radius: 1px;
  background: transparent;
  color: ${colors.text};
  line-height: 12px;
`;

const SelectWrap = styled.span`
  position: relative;

  i {
    position: absolute;
    top: 6px;
    right: 4px;
  }
`;

const Submit = styled.button`
  width: 100%;
  height: 25px;
  border-radius: 2px;
  background: ${colors.green};
  color: #fff;
  font-size: 9px;
  font-weight: 700;
`;

const AssetsHead = styled.div`
  display: flex;
  align-items: center;
  justify-content: space-between;
  margin: 49px 0 7px;

  a {
    display: flex;
    align-items: center;
    gap: 3px;
    color: ${colors.muted};
  }

  span {
    padding: 0 3px;
    border-radius: 2px;
    background: #4a3711;
    color: #eda51c;
    font-weight: 500;
    line-height: 9px;
  }
`;

const AssetButtons = styled.div`
  display: grid;
  grid-template-columns: 1fr 1fr;
  gap: 5px;
  margin-bottom: 8px;

  button {
    height: 15px;
    border-radius: 1px;
    background: ${colors.button};
    color: #c3c8ce;
    font-size: 8px;
    font-weight: 500;
  }
`;

const AssetRow = styled.p`
  display: flex;
  align-items: center;
  height: 14px;
  font-size: 7px;
  font-weight: 500;

  span {
    margin: 0 auto 0 2px;
    color: ${colors.dim};
    font-weight: 400;
  }
`;

const ChatButton = styled(IconButton)`
  position: absolute;
  right: 15px;
  bottom: 10px;
  width: 25px;
  height: 25px;
  border-radius: 50%;
  background: #f3c11b;
`;

const OrderForm = () => {
  const [price, setPrice] = useState("35416,47");
  const [amount, setAmount] = useState("");
  const [total, setTotal] = useState("");
  const [share, setShare] = useState(0);
  return (
    <FormPanel>
      <FormHead>
        <Title>Разместить ордер</Title>
        <a href="#">VIP 0</a>
        <Dots />
      </FormHead>
      <Sides>
        <Side $active>КУПИТЬ</Side>
        <Side>ПРОДАТЬ</Side>
      </Sides>
      <TypeTabs>
        <TypeTab $active>Лимит</TypeTab>
        <TypeTab>Маркет</TypeTab>
        <TypeTab>
          <Icon size={8} strokeWidth="1.6">
            <circle cx="8" cy="8" r="6.8" />
            <path d="M8 4v1.500M8 7v5" />
          </Icon>
          Стоп-Лимит <Caret />
        </TypeTab>
      </TypeTabs>
      <Balance>
        <Icon size={10} strokeWidth="1.4">
          <path d="M1 3.500h12v3M1 3.500v10h14v-7H1M10.500 10H15" />
        </Icon>
        0.01478861 USDT
      </Balance>
      <Stack>
        <Field>
          Цена
          <input value={price} onChange={(e) => setPrice(e.target.value)} />
          USDT
        </Field>
        <Field>
          Количество
          <input value={amount} onChange={(e) => setAmount(e.target.value)} />
          BTC
        </Field>
        <SliderRow>
          <input
            type="range"
            aria-label="Доля баланса"
            value={share}
            onChange={(e) => setShare(e.target.value)}
          />
        </SliderRow>
        <Field>
          Всего
          <input value={total} onChange={(e) => setTotal(e.target.value)} />
          USDT
        </Field>
      </Stack>
      <Options>
        <Option>
          <Check type="checkbox" />
          Только размещение
        </Option>
        <Option as="div">
          <label htmlFor="tif">TIF</label>
          <SelectWrap>
            <TifSelect id="tif" defaultValue="GTC">
              <option>GTC</option>
              <option>IOC</option>
              <option>FOK</option>
            </TifSelect>
            <Caret />
          </SelectWrap>
        </Option>
        <Option>
          <Check type="checkbox" />
          Айсберг
        </Option>
      </Options>
      <Submit>Купить BTC</Submit>
      <AssetsHead>
        <Title>Активы</Title>
        <a href="#">
          Купить за <span>USD</span>
          <Icon size={8} strokeWidth="1.6"><path d="M6 2l6 6-6 6" /></Icon>
        </a>
      </AssetsHead>
      <AssetButtons>
        <button>Пополнить</button>
        <button>Вывести</button>
      </AssetButtons>
      <AssetRow>BTC <span>Доступно:</span> 0.00040659</AssetRow>
      <AssetRow>USDT <span>Доступно:</span> 0.01478861</AssetRow>
      <ChatButton aria-label="Чат" $color="#1f2026">
        <Icon size={12} strokeWidth="1.5">
          <path d="M1 2h14v9H8l-3 3v-3H1zM4 5h8M4 8h8" />
        </Icon>
      </ChatButton>
    </FormPanel>
  );
};

const App = () => (
  <Shell>
    <GlobalStyle />
    <TopBar />
    <Body>
      <Workspace>
        <PairTicker />
        <Panels>
          <Column>
            <Chart />
            <OpenOrders />
          </Column>
          <Column>
            <OrderBook />
            <Trades />
          </Column>
        </Panels>
      </Workspace>
      <OrderForm />
    </Body>
  </Shell>
);

export default App;
